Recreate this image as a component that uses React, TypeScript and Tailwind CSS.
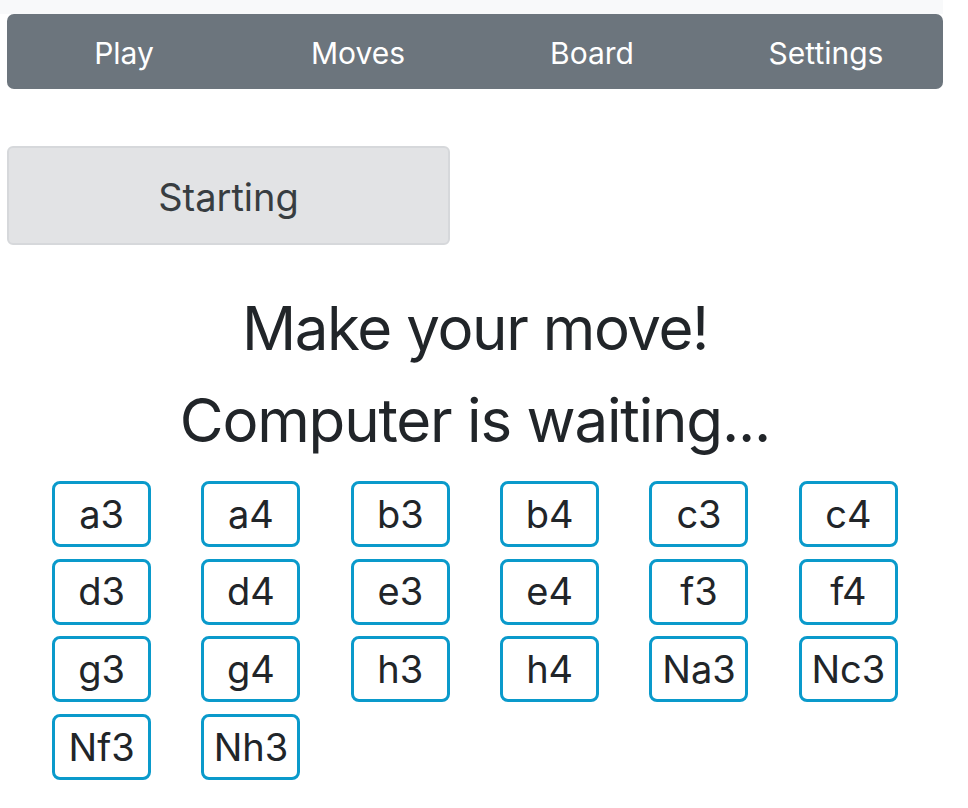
import React from "react";

const tabs = ["Play", "Moves", "Board", "Settings"];

const moves = [
  "a3", "a4", "b3", "b4", "c3", "c4",
  "d3", "d4", "e3", "e4", "f3", "f4",
  "g3", "g4", "h3", "h4", "Na3", "Nc3",
  "Nf3", "Nh3",
];

export default function App() {
  return (
    <div className="min-h-screen bg-white font-['Inter','Liberation_Sans',sans-serif] text-[#212529]">
      <div className="w-[943px]">
        <div className="h-[14px] bg-[#f8f9fa]" />
        <div className="pl-[7px]">
          <nav className="grid h-[75px] grid-cols-4 items-center rounded-[7px] bg-[#6c757d] pt-[3px]">
            {tabs.map((t) => (
              <span key={t} className="text-center text-[30px] text-white">
                {t}
              </span>
            ))}
          </nav>

          <div className="mt-[57px] flex h-[99px] w-[443px] items-center justify-center rounded-[6px] border-2 border-[#d6d8db] bg-[#e2e3e5] pt-[4px] text-[38px] text-[#383d41]">
            Starting
          </div>

          <div className="mt-[45px] text-center">
            <h2 className="mb-[16px] text-[60px] leading-[76px] tracking-[-1.4px]">Make your move!</h2>
            <h2 className="mb-[16px] text-[60px] leading-[76px] tracking-[-1.2px]">Computer is waiting...</h2>
          </div>

          <div className="mt-[23px] grid grid-cols-6 justify-items-center gap-y-[11.7px] px-[20px]">
            {moves.map((m) => (
              <button
                key={m}
                className="flex h-[66px] w-[99px] items-center justify-center rounded-[8px] border-[3px] border-[#0a9acb] bg-white text-[38px] text-[#212529]"
              >
                {m}
              </button>
            ))}
          </div>
        </div>
      </div>
    </div>
  );
}
